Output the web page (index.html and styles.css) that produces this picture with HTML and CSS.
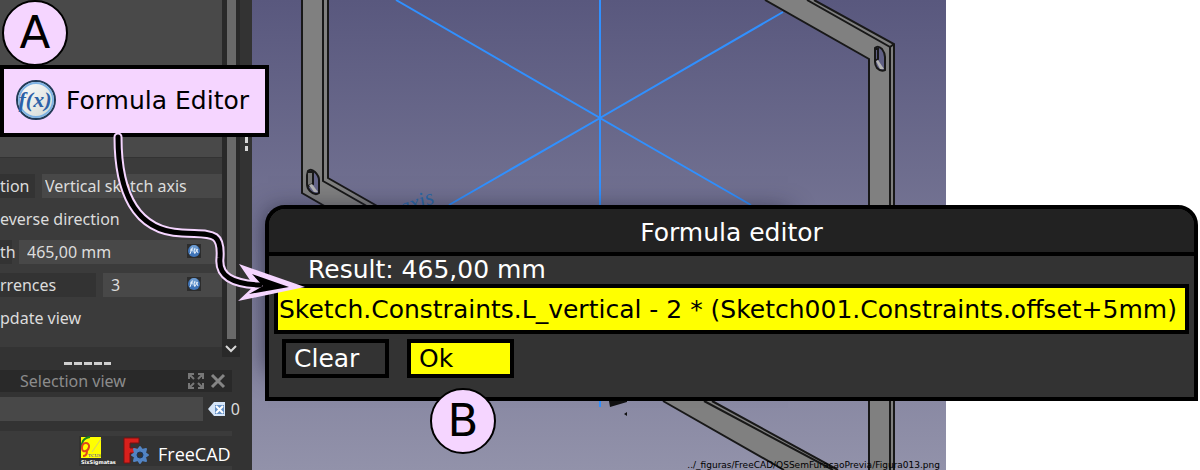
FILE: index.html
```
<!DOCTYPE html>
<html lang="en">
<head>
    <meta charset="UTF-8">
    <meta name="viewport" content="width=device-width, initial-scale=1.0">
    <title>Formula editor</title>
    <link rel="stylesheet" href="styles.css">
</head>
<body>
    <div class="page">
        <!-- Side panel -->
        <aside class="panel">
            <div class="tasks">
                <div class="task-list">
                    <div class="list-box"></div>
                    <form class="params">
                        <div class="row">
                            <label class="tag tag-direction" for="direction">tion</label>
                            <select class="field" id="direction">
                                <option>Vertical sketch axis</option>
                            </select>
                        </div>
                        <div class="row plain">everse direction</div>
                        <div class="row">
                            <label class="tag tag-length" for="length">th</label>
                            <div class="field-wrap">
                                <input class="field" type="text" id="length" value="465,00 mm">
                                <svg class="fx" viewBox="0 0 14 14"><rect width="14" height="14" fill="#2c2c2c"/><circle cx="7" cy="7" r="6" fill="#3f74b8"/><circle cx="7" cy="5" r="4" fill="#6d9bd0"/><path d="M3 10l2-6h1M3 6h3M8 4q-2 3 0 6M9 5l2 4M11 5L8 9" stroke="#e4eefa" fill="none"/></svg>
                            </div>
                        </div>
                        <div class="row">
                            <label class="tag tag-count" for="count">rrences</label>
                            <div class="field-wrap">
                                <input class="field" type="text" id="count" value="3">
                                <svg class="fx" viewBox="0 0 14 14"><rect width="14" height="14" fill="#2c2c2c"/><circle cx="7" cy="7" r="6" fill="#3f74b8"/><circle cx="7" cy="5" r="4" fill="#6d9bd0"/><path d="M3 10l2-6h1M3 6h3M8 4q-2 3 0 6M9 5l2 4M11 5L8 9" stroke="#e4eefa" fill="none"/></svg>
                            </div>
                        </div>
                        <div class="row plain">pdate view</div>
                    </form>
                </div>
                <div class="scrollbar">
                    <div class="thumb"></div>
                    <svg class="chevron" viewBox="0 0 12 8"><path d="M1 1l5 5 5-5" fill="none" stroke="#d8d8d8" stroke-width="2"/></svg>
                </div>
                <div class="grip"></div>
            </div>
            <div class="splitter"></div>
            <div class="view-title">
                <span>Selection view</span>
                <button type="button" class="tool" aria-label="Float"><svg width="16" height="16" viewBox="0 0 16 16"><path d="M1 6V1h5M10 1h5v5M15 10v5h-5M6 15H1v-5M1 1l5 5M15 1l-5 5M15 15l-5-5M1 15l5-5" fill="none" stroke="#777" stroke-width="2"/></svg></button>
                <button type="button" class="tool" aria-label="Close"><svg width="16" height="16" viewBox="0 0 16 16"><path d="M2 2l12 12M14 2L2 14" stroke="#858585" stroke-width="3"/></svg></button>
            </div>
            <div class="search">
                <input class="field" type="text" aria-label="Search selection">
                <button type="button" class="tool" aria-label="Clear search"><svg width="18" height="14" viewBox="0 0 18 14"><path d="M0 7l6-7h11v14H6z" fill="#d5e5f8"/><path d="M7 3h9v9H7z" fill="#6591c7"/><path d="M8 4l7 7M15 4l-7 7" stroke="#fff" stroke-width="2"/></svg></button>
                <span>0</span>
            </div>
            <div class="brands">
                <div class="brand-strip">
                    <svg width="38" height="30" viewBox="0 0 38 30">
                        <rect x="2" y="1" width="20" height="21" fill="#ffff00"/>
                        <path d="M11 1C4 2 2 7 3 12" fill="none" stroke="#18851c" stroke-width="2"/>
                        <path d="M3 12c0-7 8-6 7-1s-7 6-7 1M8 15c0 3-1 5-4 5" fill="none" stroke="#e0461c" stroke-width="2"/>
                        <path d="M13 16L22 3" stroke="#d6cc70"/>
                        <text x="9" y="21" class="logo-sub">TCUS</text>
                        <text x="2" y="28" class="logo-name">SixSigmatas</text>
                    </svg>
                    <svg width="27" height="28" viewBox="0 0 27 28">
                        <path d="M1 1h15v5H7v5h6v5H7v10H1z" fill="#d9201c" stroke="#7b1010"/>
                        <path d="M25 18L22 20L23 24L19 23L17 26L15 23L11 24L12 20L9 18L12 16L11 12L15 13L17 10L19 13L23 12L22 16z" fill="#5284c4" stroke="#5284c4" stroke-width="2" stroke-linejoin="round"/>
                        <circle cx="17" cy="18" r="3" fill="#333" stroke="#17365f"/>
                    </svg>
                    <span class="brand-name">FreeCAD</span>
                </div>
            </div>
        </aside>

        <!-- 3D view -->
        <main class="scene">
            <svg class="model" viewBox="252 0 694 470" preserveAspectRatio="xMinYMin meet">
                <g stroke="#3090ff" stroke-width="2" fill="none">
                    <path d="M600 0V407M396 0L600 118L449 205M783 12L600 118L751 205M795 6l4-3"/>
                </g>
                <text class="axis-name" transform="translate(402 215) rotate(-20)">axis</text>
                <g fill="#808080">
                    <path d="M302 0H328V178L376 206L430 240H380L302 193z"/>
                    <path d="M765 0H814L894 44V470H869V59z"/>
                    <path d="M663 401H712L838 470H784z"/>
                </g>
                <g stroke="#181818" stroke-width="2" fill="none">
                    <path d="M302 0V193L380 238M323 0V181L400 225M328 0V178L400 219"/>
                    <path d="M765 0L869 59V470M807 0L890 47V470M814 0L894 44V470M890 47l4-3"/>
                    <path d="M663 401L784 470M704 401L833 470M712 401L838 470"/>
                    <path d="M308 171q3-3 7 1q4 4 4 8v13q-4 3-9-2q-3-3-3-7v-9z" fill="#66668a"/>
                    <path d="M308 172h5v12l-5 2" fill="#777"/>
                    <path d="M875 48q3-3 7 1q3 4 3 8v13q-4 2-8-2q-2-3-2-6z" fill="#5f5f84"/>
                    <path d="M875 49h3v10l-3 2"/>
                </g>
                <path d="M309 185l3-1 6 8h-4zM876 61l2-1 6 9h-4z" fill="#b5b5b5"/>
                <path d="M609 401l1 6 17-5v-1zM624 414l3-2v4z" fill="#111"/>
            </svg>
            <div class="shade"></div>
            <span class="caption">../_figuras/FreeCAD/QSSemFuracaoPrevia/Figura013.png</span>
        </main>

        <!-- Dialog -->
        <form class="dialog">
            <h1 class="dialog-title">Formula editor</h1>
            <div class="dialog-body">
                <label class="result" for="formula">Result: 465,00 mm</label>
                <input class="formula" type="text" id="formula" value="Sketch.Constraints.L_vertical - 2 * (Sketch001.Constraints.offset+5mm)">
                <div class="actions">
                    <button type="button" class="btn">Clear</button>
                    <button type="button" class="btn btn-ok">Ok</button>
                </div>
            </div>
        </form>

        <!-- Callouts -->
        <div class="callout">
            <svg width="42" height="42" viewBox="0 0 42 42">
                <defs><linearGradient id="disc" x2="1" y2="1"><stop stop-color="#fff"/><stop offset="1" stop-color="#d2d8d2"/></linearGradient></defs>
                <circle cx="21" cy="21" r="19" fill="url(#disc)" stroke="#233b57" stroke-width="2"/>
                <circle cx="21" cy="21" r="17" fill="none" stroke="#7fb3e3" stroke-width="2"/>
                <text x="20" y="28" class="fx-text">f(x)</text>
            </svg>
            <span>Formula Editor</span>
        </div>
        <svg class="arrow" width="310" height="310" viewBox="0 0 310 310">
            <path d="M118 137C118 190 134 231 182 233C210 235 222 230 220 258C218 276 232 284 260 285" fill="none" stroke="#f5d5ff" stroke-width="9" stroke-linecap="round"/>
            <path d="M239 264L305 287L238 301L254 286z" fill="#f5d5ff"/>
            <path d="M118 137C118 190 134 231 182 233C210 235 222 230 220 258C218 276 232 284 260 285" fill="none" stroke="#000" stroke-width="5" stroke-linecap="round"/>
            <path d="M252 274L289 287L249 294L263 286z"/>
        </svg>
        <span class="badge badge-a">A</span>
        <span class="badge badge-b">B</span>
    </div>
</body>
</html>
```
FILE: styles.css
```
* {
    box-sizing: border-box;
}

body {
    margin: 0;
    background-color: #fff;
    font-family: "DejaVu Sans", sans-serif;
}

.page {
    position: relative;
    display: flex;
    min-height: 100vh;
    overflow: hidden;
}

button, input, select {
    font: inherit;
    color: inherit;
    border: none;
    border-radius: 0;
    padding: 0;
    margin: 0;
    appearance: none;
}

/* Side panel */
.panel {
    flex: 0 0 252px;
    display: flex;
    flex-direction: column;
    background-color: #333;
    color: #dcdcdc;
    font-family: "Noto Sans", sans-serif;
    font-size: 16px;
    line-height: 24px;
}

.tasks {
    display: flex;
    height: 357px;
}

.task-list {
    flex: 1;
    min-width: 0;
    height: 347px;
    background-color: #3b3b3b;
}

.list-box {
    height: 158px;
    background-color: #494949;
    border-bottom: 1px solid #333;
}

.params {
    display: flex;
    flex-direction: column;
    gap: 9px;
    padding-top: 16px;
}

.row {
    display: flex;
    gap: 7px;
    height: 24px;
    white-space: nowrap;
}

.tag {
    background-color: #333;
}

.tag-direction {
    width: 35px;
}

.tag-length {
    width: 12px;
}

.tag-count {
    width: 96px;
}

.field {
    flex: 1;
    width: 100%;
    min-width: 0;
    height: 24px;
    padding-left: 3px;
    background-color: #484848;
}

.field-wrap {
    flex: 1;
    display: flex;
    position: relative;
}

.field-wrap .field {
    padding-left: 8px;
}

.fx {
    position: absolute;
    top: 4px;
    right: 21px;
    width: 14px;
    height: 14px;
}

.scrollbar {
    width: 18px;
    display: flex;
    flex-direction: column;
    align-items: center;
    gap: 6px;
    background-color: #292929;
}

.thumb {
    width: 9px;
    height: 339px;
    background-color: #696969;
}

.chevron {
    width: 12px;
    height: 8px;
}

.grip {
    width: 12px;
    margin-top: 115px;
    height: 36px;
    background: repeating-linear-gradient(#d8d8d8 0 7px, transparent 7px 10px) center / 3px 35px no-repeat;
}

.splitter {
    width: 47px;
    height: 3px;
    margin: 5px 0 5px 64px;
    background: repeating-linear-gradient(90deg, #d0d0d0 0 8px, transparent 8px 10px);
}

.view-title {
    display: flex;
    align-items: center;
    gap: 6px;
    height: 22px;
    margin-right: 20px;
    padding: 0 6px 0 20px;
    background-color: #292929;
    color: #8c8c8c;
}

.view-title span {
    flex: 1;
}

.tool {
    display: flex;
    background: none;
}

.search {
    display: flex;
    align-items: center;
    gap: 5px;
    margin-top: 5px;
    padding-right: 12px;
}

.brands {
    margin: 10px 20px 0 0;
    padding: 5px 0;
    background-color: #3b3b3b;
}

.brand-strip {
    display: flex;
    align-items: center;
    gap: 6px;
    height: 30px;
    margin-left: 79px;
    background-color: #333;
}

.brand-name {
    color: #fff;
    font-family: "Open Sans", sans-serif;
    font-size: 18px;
    padding: 6px 0 0 2px;
}

.logo-sub {
    font: 5px "Liberation Serif", serif;
    fill: #4030c0;
}

.logo-name {
    font: bold 5px "DejaVu Sans", sans-serif;
    fill: #fff;
}

/* 3D view */
.scene {
    flex: 0 1 694px;
    position: relative;
    overflow: hidden;
    background: linear-gradient(#59587e, #9292aa);
}

.model {
    display: block;
    width: 100%;
}

.axis-name {
    font: italic 22px "Liberation Serif", serif;
    fill: #2b69a8;
}

.shade {
    position: absolute;
    top: 212px;
    left: 16px;
    width: 520px;
    height: 160px;
    box-shadow: 0 0 24px rgba(20, 20, 40, 0.8);
}

.caption {
    position: absolute;
    right: 6px;
    bottom: 0;
    font-size: 9px;
    line-height: 12px;
    white-space: nowrap;
}

/* Dialog */
.dialog {
    position: absolute;
    top: 205px;
    left: 265px;
    right: 2px;
    border: 4px solid #000;
    border-radius: 20px 20px 0 0;
    background-color: #333;
    color: #fff;
    font-size: 25px;
    line-height: 28px;
    overflow: hidden;
}

.dialog-title {
    margin: 0;
    padding: 10px 0 5px;
    border-bottom: 4px solid #000;
    background-color: #222;
    font-size: 25px;
    font-weight: normal;
    text-align: center;
}

.dialog-body {
    padding: 0 5px 19px;
}

.result {
    display: block;
    padding-left: 34px;
}

.formula {
    display: block;
    width: 100%;
    height: 50px;
    padding: 0 1px;
    border: 4px solid #000;
    background-color: #ff0;
    color: #000;
}

.actions {
    display: flex;
    gap: 18px;
    padding: 5px 8px 0;
}

.btn {
    width: 107px;
    height: 39px;
    padding: 0 8px;
    border: 4px solid #000;
    background-color: #333;
    text-align: left;
}

.btn-ok {
    background-color: #ff0;
    color: #000;
}

/* Callouts */
.callout {
    position: absolute;
    top: 65px;
    left: 0;
    display: flex;
    align-items: center;
    gap: 9px;
    width: 269px;
    height: 72px;
    padding: 0 11px 2px;
    border: 4px solid #000;
    background-color: #f5d5ff;
    font-size: 25px;
    white-space: nowrap;
}

.fx-text {
    font: italic bold 22px "Liberation Serif", serif;
    fill: #2d62a8;
    text-anchor: middle;
}

.arrow {
    position: absolute;
    top: 0;
    left: 0;
}

.badge {
    position: absolute;
    width: 66px;
    height: 66px;
    border: 2px solid #000;
    border-radius: 50%;
    background-color: #f5d5ff;
    font-size: 45px;
    line-height: 62px;
    text-align: center;
}

.badge-a {
    top: 0;
    left: 2px;
}

.badge-b {
    top: 388px;
    left: 430px;
}
```
